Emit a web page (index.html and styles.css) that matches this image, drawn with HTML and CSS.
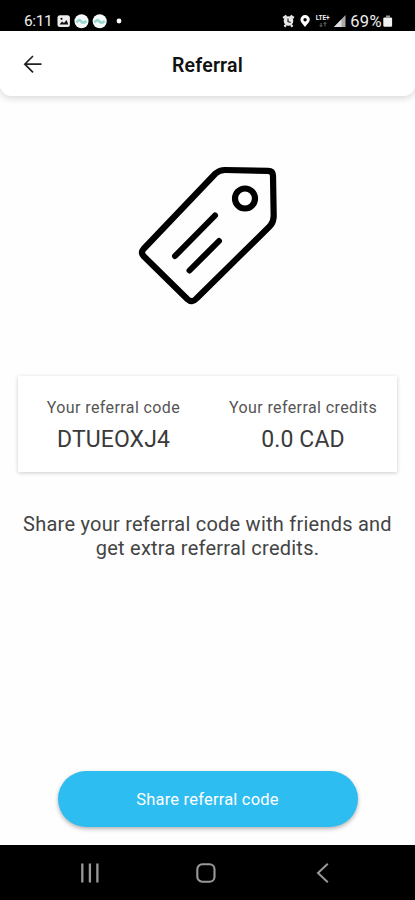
FILE: index.html
```html
<!DOCTYPE html>
<html lang="en">
<head>
    <meta charset="UTF-8">
    <meta name="viewport" content="width=device-width, initial-scale=1.0">
    <title>Referral</title>
    <link rel="stylesheet" href="styles.css">
</head>
<body>
    <!-- Status bar -->
    <div class="status-bar">
        <span class="clock">6:11</span>
        <svg class="status-left" width="66" height="16" viewBox="0 0 66 16">
            <rect x="1.5" y="2.2" width="12.4" height="11.8" rx="2.5" fill="#eee"/>
            <path d="M3.5 11.5 L6 8.5 L8 10 L10.5 7 L12.3 11.5 Z" fill="#111"/>
            <circle cx="5.5" cy="5.8" r="1.1" fill="#111"/>
            <circle cx="25.5" cy="8.3" r="7" fill="#f4fbfa"/>
            <path d="M20.5 9.5 Q23 5.5 25 8.3 T30.5 8" fill="none" stroke="#9bd8d2" stroke-width="2.6"/>
            <circle cx="43.7" cy="8.3" r="7" fill="#f4fbfa"/>
            <path d="M38.7 9.5 Q41.2 5.5 43.2 8.3 T48.7 8" fill="none" stroke="#9bd8d2" stroke-width="2.6"/>
            <circle cx="63" cy="8" r="2.4" fill="#fff"/>
        </svg>
        <div class="status-right">
            <svg width="28" height="16" viewBox="0 0 28 16">
                <circle cx="6.5" cy="8" r="4.8" fill="#e8e8e8"/>
                <path d="M1.2 5 L4.5 2.6 M11.8 5 L8.5 2.6 M2.4 13.6 L4 12 M10.6 13.6 L9 12" stroke="#e8e8e8" stroke-width="2.2" fill="none"/>
                <path d="M6 5.5 V8.5 L8.7 9.5" stroke="#222" stroke-width="1.2" fill="none"/>
                <path d="M23 14 C20.5 10.8 18.4 9 18.4 6.8 A4.7 4.7 0 0 1 27.8 6.8 C27.8 9 25.5 10.8 23 14 Z" fill="#fff"/>
                <circle cx="23.1" cy="6.8" r="1.7" fill="#000"/>
            </svg>
            <div class="network">
                <span>LTE+</span>
                <svg width="8" height="5" viewBox="0 0 8 5">
                    <path d="M2 5 V.8 M.5 3 L2 4.5 L3.5 3 M6 0 V4.5 M4.5 2 L6 .5 L7.5 2" stroke="#666" fill="none"/>
                </svg>
            </div>
            <svg width="12" height="14" viewBox="0 0 12 14">
                <path d="M0 13 L11.5 1 V13 Z" fill="#aaa"/>
                <path d="M0 13 L7.5 5.2 V13 Z" fill="#ddd"/>
            </svg>
            <span class="percent">69%</span>
            <svg width="10" height="14" viewBox="0 0 10 14">
                <path d="M3 1.5 H7 V3.3 H3 Z" fill="#999"/>
                <rect x=".3" y="3.4" width="8.8" height="9.4" rx="1.2" fill="#f2f2f2"/>
            </svg>
        </div>
    </div>

    <!-- Header -->
    <header class="header">
        <svg class="back" width="20" height="20" viewBox="0 0 20 20">
            <path d="M18.5 9.2 H2 M10 1 L1.8 9.2 L10 17.4" fill="none" stroke="#222" stroke-width="1.7"/>
        </svg>
        <h1>Referral</h1>
    </header>

    <main class="content">
        <svg class="tag" width="165" height="160" viewBox="0 0 165 160" fill="none" stroke="#000" stroke-linecap="round" stroke-linejoin="round">
            <path d="M90.5 18.5 Q94.5 15 100 15 L143 15.8 Q148 16 148 20.5 L148.7 61 Q148.7 67 145 71 L71.5 143.5 Q67 148.5 62.5 144.3 L18.5 101 Q15.5 97.5 18.5 94 Z" stroke-width="6.2"/>
            <circle cx="120" cy="43.5" r="10" stroke-width="6.2"/>
            <path d="M50 101 L90 60.5 M64.5 115.5 L94 86" stroke-width="6"/>
        </svg>

        <section class="card">
            <div class="card-item">
                <p class="label">Your referral code</p>
                <p class="value">DTUEOXJ4</p>
            </div>
            <div class="card-item">
                <p class="label">Your referral credits</p>
                <p class="value">0.0 CAD</p>
            </div>
        </section>

        <p class="message">Share your referral code with friends and<br>get extra referral credits.</p>

        <button class="share">Share referral code</button>
    </main>

    <!-- Android navigation -->
    <nav class="nav-bar">
        <svg width="20" height="20" viewBox="0 0 20 20">
            <path d="M2.3 .5 V19.5 M9.9 .5 V19.5 M17.4 .5 V19.5" stroke="#999" stroke-width="2.3"/>
        </svg>
        <svg width="20" height="20" viewBox="0 0 20 20">
            <rect x="1.3" y="1.3" width="17.2" height="17.4" rx="5" fill="none" stroke="#999" stroke-width="2.1"/>
        </svg>
        <svg width="20" height="20" viewBox="0 0 20 20">
            <path d="M15.8 .8 L6 10 L15.8 19.2" fill="none" stroke="#999" stroke-width="2"/>
        </svg>
    </nav>
</body>
</html>
```
FILE: styles.css
```css
* {
    box-sizing: border-box;
}

body {
    margin: 0;
    height: 900px;
    display: flex;
    flex-direction: column;
    font-family: Roboto, sans-serif;
    background-color: #fefefe;
    color: #444;
    overflow: hidden;
}

h1, p {
    margin: 0;
    font-weight: 400;
}

/* Status bar */
.status-bar {
    height: 31px;
    padding: 11px 22px 0 24px;
    display: flex;
    align-items: center;
    background-color: #000;
    color: #eee;
    flex-shrink: 0;
}

.clock {
    width: 32px;
    font-size: 15.5px;
    letter-spacing: -0.4px;
}

.status-right {
    margin-left: auto;
    display: flex;
    align-items: center;
}

.network {
    width: 17px;
    margin: 0 3px 0 4px;
    display: flex;
    flex-direction: column;
    align-items: center;
    font-size: 6.5px;
    line-height: 7px;
    font-weight: 700;
}

.percent {
    margin: 0 1px 0 4px;
    font-size: 16.5px;
    letter-spacing: 0.4px;
}

/* Header */
.header {
    height: 65px;
    padding: 3px 23px 0;
    display: grid;
    grid-template-columns: 20px 1fr 20px;
    align-items: center;
    background-color: #fff;
    border-radius: 0 0 11px 11px;
    box-shadow: 0 2px 7px rgba(0, 0, 0, 0.16);
    flex-shrink: 0;
}

.header h1 {
    font-size: 19.5px;
    font-weight: 600;
    letter-spacing: 0.2px;
    text-align: center;
    color: #111;
}

/* Content */
.content {
    flex: 1;
    display: flex;
    flex-direction: column;
    align-items: center;
}

.tag {
    margin-top: 59px;
}

.card {
    width: 379px;
    height: 96px;
    margin-top: 61px;
    padding-top: 22px;
    display: grid;
    grid-template-columns: 191px 188px;
    background-color: #fff;
    box-shadow: 0 1px 4px rgba(0, 0, 0, 0.2);
    text-align: center;
}

.label {
    font-size: 16px;
    line-height: 20px;
    letter-spacing: 0.4px;
    color: #555;
}

.value {
    margin-top: 8px;
    font-size: 23px;
    line-height: 28px;
    letter-spacing: 0.1px;
    color: #3a3a3a;
}

.message {
    margin-top: 40px;
    font-size: 20px;
    line-height: 24px;
    letter-spacing: 0.24px;
    text-align: center;
    white-space: nowrap;
}

.share {
    width: 300px;
    height: 56px;
    margin: auto 0 18px;
    border: none;
    border-radius: 28px;
    background-color: #2dbdf1;
    box-shadow: 0 2px 4px rgba(0, 0, 0, 0.3);
    color: #fff;
    font-family: inherit;
    font-size: 16.5px;
    letter-spacing: 0.2px;
}

/* Navigation bar */
.nav-bar {
    height: 55px;
    padding: 0 83px 0 80px;
    display: flex;
    align-items: center;
    justify-content: space-between;
    background-color: #000;
    flex-shrink: 0;
}
```
